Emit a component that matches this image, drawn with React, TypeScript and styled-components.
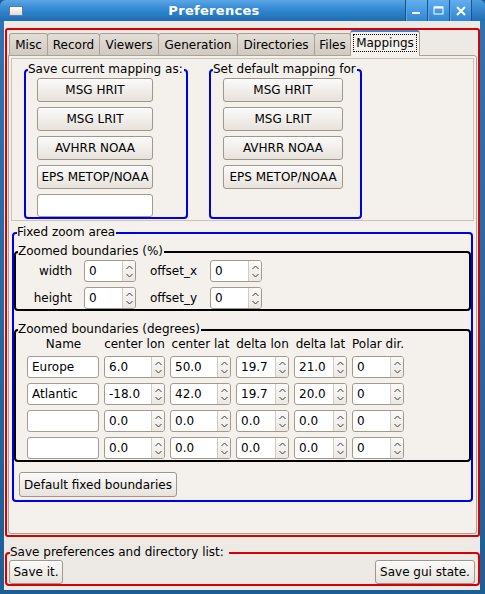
import * as React from 'react';
import styled, { createGlobalStyle } from 'styled-components';

const GlobalStyle = createGlobalStyle`
    html, body {
        margin: 0;
        padding: 0;
        background: #1d5e96;
    }

    body {
        font-family: "DejaVu Sans", Verdana, sans-serif;
        font-size: 12px;
        color: #000;
    }
`;

const Window = styled.div`
    width: 485px;
    height: 594px;
    display: flex;
    flex-direction: column;
    background: linear-gradient(#2c74b4, #1d5e96);
    border-radius: 6px 6px 0 0;
    overflow: hidden;
`;

const TitleBar = styled.div`
    height: 21px;
    display: flex;
    align-items: stretch;
    background: linear-gradient(#5ba6e6 0%, #3288d2 45%, #1f6db3 100%);
`;

const AppIcon = styled.div`
    width: 12px;
    height: 8px;
    margin: 6px 0 0 9px;
    background: linear-gradient(#ffffff, #dcdcdc);
    border: 1px solid #6b7c8c;
`;

const Title = styled.div`
    flex: 1;
    text-align: center;
    color: #fff;
    font-weight: bold;
    font-size: 13px;
    line-height: 21px;
    letter-spacing: 0.3px;
`;

const WinButton = styled.div`
    width: 21px;
    display: flex;
    align-items: center;
    justify-content: center;
    border-left: 1px solid #17558c;
    box-shadow: inset 1px 0 0 #5aa6e8;
    background: linear-gradient(#62aeee, #2f86d0);
`;

const TitleEnd = styled.div`
    width: 13px;
    border-left: 1px solid #17558c;
    background: linear-gradient(#4c9ce0, #1f6db3);
`;

const Client = styled.div`
    flex: 1;
    margin: 0 5px 4px 4px;
    padding-top: 7px;
    background: #edeae6;
    display: flex;
    flex-direction: column;
`;

const Outline = styled.div`
    margin-left: 1px;
    height: 509px;
    box-sizing: border-box;
    border: 2px solid #d80000;
    border-radius: 3px;
    display: flex;
    flex-direction: column;
`;

const TabStrip = styled.div`
    height: 25px;
    display: flex;
    align-items: flex-end;
    padding-left: 2px;
`;

const Tab = styled.div<{ $w: number; $active?: boolean }>`
    box-sizing: border-box;
    width: ${p => p.$w + 1}px;
    margin-right: -1px;
    height: ${p => (p.$active ? 26 : 22)}px;
    border: 1px solid #a9a096;
    border-bottom: none;
    border-top: ${p => (p.$active ? '2px solid #3f85c8' : '1px solid #a9a096')};
    border-radius: 3px 3px 0 0;
    background: ${p => (p.$active ? '#f4f1ed' : 'linear-gradient(#e2ddd6, #d1cac1)')};
    margin-bottom: ${p => (p.$active ? -1 : 0)}px;
    position: relative;
    z-index: ${p => (p.$active ? 1 : 0)};
    display: flex;
    align-items: center;
    justify-content: center;
    padding-bottom: ${p => (p.$active ? 2 : 0)}px;
`;

const FocusLabel = styled.span`
    border: 1px dotted #000;
    padding: 0 2px;
    line-height: 16px;
`;

const Panel = styled.div`
    flex: 1;
    margin: 0 1px 1px;
    padding: 1px 1px 0;
    background: #f4f1ed;
    border: 1px solid #aaa197;
    border-radius: 0 3px 3px 3px;
    display: flex;
    flex-direction: column;
`;

const MappingFrame = styled.div`
    margin: 1px 1px 0;
    height: 163px;
    box-sizing: border-box;
    border: 1px solid #cbc3b9;
    padding: 3px 0 1px 12px;
    display: flex;
    align-items: stretch;
    gap: 21px;
`;

const Group = styled.fieldset<{ $color: string; $w?: number }>`
    margin: 0;
    padding: 0;
    min-width: 0;
    ${p => (p.$w ? `width: ${p.$w}px;` : '')}
    box-sizing: border-box;
    border: 2px solid ${p => p.$color};
    border-radius: 4px;
    display: flex;
    flex-direction: column;
`;

const Caption = styled.legend<{ $indent?: number; $tail?: number }>`
    margin-left: ${p => p.$indent ?? 2}px;
    padding: 0 ${p => p.$tail ?? 1}px 0 0;
    line-height: 15px;
    white-space: nowrap;
`;

const ButtonStack = styled.div<{ $indent: number }>`
    display: flex;
    flex-direction: column;
    gap: 5px;
    padding: 1px 0 0 ${p => p.$indent}px;
`;

const Button = styled.button<{ $w: number; $h?: number }>`
    box-sizing: border-box;
    width: ${p => p.$w}px;
    height: ${p => p.$h ?? 24}px;
    padding: 0 3px;
    font-family: "DejaVu Sans", Verdana, sans-serif;
    font-size: 12px;
    color: #000;
    white-space: nowrap;
    border: 1px solid #a0978c;
    border-radius: 3px;
    background: linear-gradient(#fbfaf9, #e7e2dc);
    box-shadow: inset 0 1px 0 #fff;
    flex-shrink: 0;
`;

const Entry = styled.div<{ $w?: number; $h?: number }>`
    box-sizing: border-box;
    width: ${p => (p.$w ? `${p.$w}px` : 'auto')};
    height: ${p => p.$h ?? 22}px;
    padding-left: 4px;
    line-height: 20px;
    background: #fff;
    border: 1px solid #a59c91;
    border-radius: 3px;
    white-space: nowrap;
    overflow: hidden;
`;

const ZoomArea = styled(Group)`
    margin: 4px 2px 0;
`;

const Boundaries = styled(Group)<{ $gap: number }>`
    margin-top: ${p => p.$gap}px;
`;

const PercentGrid = styled.div`
    display: grid;
    grid-template-columns: 56px 52px 50px 52px;
    grid-auto-rows: 22px;
    column-gap: 12px;
    row-gap: 5px;
    padding-top: 1px;
    align-items: center;

    & > :nth-child(4n + 3) {
        margin-left: 2px;
    }
`;

const RowLabel = styled.span<{ $right?: boolean }>`
    text-align: ${p => (p.$right ? 'right' : 'left')};
    line-height: 22px;
`;

const DegreeGrid = styled.div`
    display: grid;
    grid-template-columns: 72px 61px 61px 53px 53px 52px;
    grid-template-rows: 14px repeat(4, 22px);
    column-gap: 5px;
    row-gap: 5px;
    padding: 0 0 1px 11px;

    & > :first-child {
        margin-right: -1px;
    }
`;

const ColHead = styled.span`
    text-align: center;
    line-height: 14px;
    white-space: nowrap;
`;

const SpinBox = styled.div`
    box-sizing: border-box;
    height: 22px;
    display: flex;
    background: #fff;
    border: 1px solid #a39a8e;
    border-radius: 3px;
    overflow: hidden;
`;

const SpinValue = styled.span`
    flex: 1;
    padding-left: 4px;
    line-height: 20px;
    overflow: hidden;
    white-space: nowrap;
`;

const SpinArrows = styled.div`
    width: 12px;
    border-left: 1px solid #d2cbc2;
    background: linear-gradient(#fbfaf9, #ece8e3);
    display: flex;
    flex-direction: column;
    align-items: center;
    justify-content: space-around;
    padding: 2px 0;
`;

const ResetButton = styled(Button)`
    margin: 10px 0 3px 5px;
    align-self: flex-start;
`;

const SaveGroup = styled(Group)`
    margin: 8px 0 0 1px;
`;

const SaveRow = styled.div`
    display: flex;
    justify-content: space-between;
    padding: 0 3px 0 2px;
`;

const Chevron = ({ up }: { up?: boolean }) => (
    <svg width="7" height="5" viewBox="0 0 7 5">
        <path
            d={up ? 'M0.5 4 L3.5 1 L6.5 4' : 'M0.5 1 L3.5 4 L6.5 1'}
            fill="none"
            stroke="#3c3c3c"
            strokeWidth="1"
        />
    </svg>
);

const Spin = ({ value }: { value: string }) => (
    <SpinBox>
        <SpinValue>{value}</SpinValue>
        <SpinArrows>
            <Chevron up />
            <Chevron />
        </SpinArrows>
    </SpinBox>
);

const tabs = [
    { label: 'Misc', w: 38 },
    { label: 'Record', w: 52 },
    { label: 'Viewers', w: 59 },
    { label: 'Generation', w: 79 },
    { label: 'Directories', w: 77 },
    { label: 'Files', w: 36 },
    { label: 'Mappings', w: 69, active: true },
];

const mappings = ['MSG HRIT', 'MSG LRIT', 'AVHRR NOAA', 'EPS METOP/NOAA'];

const columns = ['Name', 'center lon', 'center lat', 'delta lon', 'delta lat', 'Polar dir.'];

const areas = [
    ['Europe', '6.0', '50.0', '19.7', '21.0', '0'],
    ['Atlantic', '-18.0', '42.0', '19.7', '20.0', '0'],
    ['', '0.0', '0.0', '0.0', '0.0', '0'],
    ['', '0.0', '0.0', '0.0', '0.0', '0'],
];

const App = () => (
    <>
        <GlobalStyle />
        <Window>
            <TitleBar>
                <AppIcon />
                <Title>Preferences</Title>
                <WinButton>
                    <svg width="9" height="9" viewBox="0 0 9 9">
                        <rect x="0" y="6" width="8" height="2" fill="#fff" />
                    </svg>
                </WinButton>
                <WinButton>
                    <svg width="11" height="9" viewBox="0 0 11 9">
                        <rect x="1" y="1" width="9" height="7" fill="none" stroke="#fff" strokeWidth="1" />
                        <rect x="1" y="0.5" width="9" height="2" fill="#fff" />
                    </svg>
                </WinButton>
                <WinButton>
                    <svg width="10" height="10" viewBox="0 0 10 10">
                        <path d="M1 1 L9 9 M9 1 L1 9" stroke="#fff" strokeWidth="2" />
                    </svg>
                </WinButton>
                <TitleEnd />
            </TitleBar>

            <Client>
                <Outline>
                    <TabStrip>
                        {tabs.map(t => (
                            <Tab key={t.label} $w={t.w} $active={t.active}>
                                {t.active ? <FocusLabel>{t.label}</FocusLabel> : t.label}
                            </Tab>
                        ))}
                    </TabStrip>

                    <Panel>
                        <MappingFrame>
                            <Group $color="#0000e6" $w={164}>
                                <Caption>Save current mapping as:</Caption>
                                <ButtonStack $indent={11}>
                                    {mappings.map(m => (
                                        <Button key={m} $w={116}>{m}</Button>
                                    ))}
                                    <Entry $w={116} $h={23} />
                                </ButtonStack>
                            </Group>
                            <Group $color="#0000e6" $w={153}>
                                <Caption>Set default mapping for</Caption>
                                <ButtonStack $indent={12}>
                                    {mappings.map(m => (
                                        <Button key={m} $w={120}>{m}</Button>
                                    ))}
                                </ButtonStack>
                            </Group>
                        </MappingFrame>

                        <ZoomArea $color="#0000e6">
                            <Caption $indent={3}>Fixed zoom area</Caption>

                            <Boundaries $color="#000" $gap={4}>
                                <Caption>Zoomed boundaries (%)</Caption>
                                <PercentGrid>
                                    <RowLabel $right>width</RowLabel>
                                    <Spin value="0" />
                                    <RowLabel>offset_x</RowLabel>
                                    <Spin value="0" />
                                    <RowLabel $right>height</RowLabel>
                                    <Spin value="0" />
                                    <RowLabel>offset_y</RowLabel>
                                    <Spin value="0" />
                                </PercentGrid>
                            </Boundaries>

                            <Boundaries $color="#000" $gap={11}>
                                <Caption>Zoomed boundaries (degrees)</Caption>
                                <DegreeGrid>
                                    {columns.map(c => (
                                        <ColHead key={c}>{c}</ColHead>
                                    ))}
                                    {areas.map((row, i) =>
                                        row.map((v, j) =>
                                            j === 0 ? (
                                                <Entry key={`${i}-${j}`}>{v}</Entry>
                                            ) : (
                                                <Spin key={`${i}-${j}`} value={v} />
                                            )
                                        )
                                    )}
                                </DegreeGrid>
                            </Boundaries>

                            <ResetButton $w={158} $h={25}>Default fixed boundaries</ResetButton>
                        </ZoomArea>
                    </Panel>
                </Outline>

                <SaveGroup $color="#d80000">
                    <Caption $indent={3} $tail={5}>Save preferences and directory list:</Caption>
                    <SaveRow>
                        <Button $w={54}>Save it.</Button>
                        <Button $w={100}>Save gui state.</Button>
                    </SaveRow>
                </SaveGroup>
            </Client>
        </Window>
    </>
);

export default App;
